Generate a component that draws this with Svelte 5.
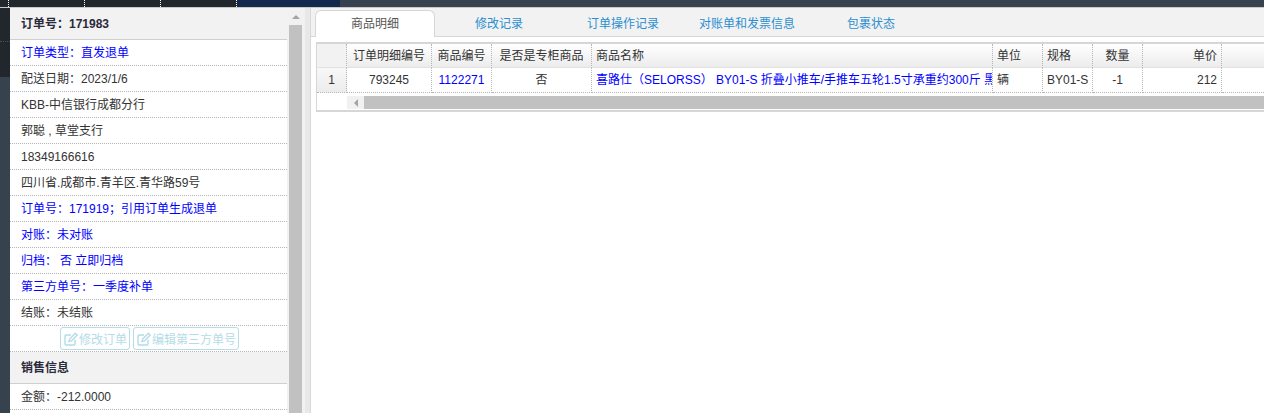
<script>
  const topTabs = [
    { label: '商品明细', active: true },
    { label: '修改记录' },
    { label: '订单操作记录' },
    { label: '对账单和发票信息' },
    { label: '包裹状态' },
  ];

  const orderRows = [
    { text: '订单类型：直发退单', blue: true },
    { text: '配送日期：2023/1/6' },
    { text: 'KBB-中信银行成都分行' },
    { text: '郭聪 , 草堂支行' },
    { text: '18349166616' },
    { text: '四川省.成都市.青羊区.青华路59号' },
    { text: '订单号：171919；引用订单生成退单', blue: true },
    { text: '对账：未对账', blue: true },
    { text: '归档：', tail: '否 立即归档', blue: true },
    { text: '第三方单号：一季度补单', blue: true },
    { text: '结账：未结账' },
  ];

  const columns = [
    { label: '订单明细编号', value: '793245', align: 'center' },
    { label: '商品编号', value: '1122271', align: 'center', blue: true },
    { label: '是否是专柜商品', value: '否', align: 'center' },
    { label: '商品名称', value: '喜路仕（SELORSS） BY01-S 折叠小推车/手推车五轮1.5寸承重约300斤 黑', align: 'left', blue: true },
    { label: '单位', value: '辆', align: 'left' },
    { label: '规格', value: 'BY01-S', align: 'left' },
    { label: '数量', value: '-1', align: 'center' },
    { label: '单价', value: '212', align: 'right' },
  ];
</script>

{#snippet editIcon()}
  <svg class="edit-icon" viewBox="0 0 14 14" width="14" height="14" aria-hidden="true">
    <path d="M11 7.5V12a1 1 0 0 1-1 1H2a1 1 0 0 1-1-1V4a1 1 0 0 1 1-1h5" fill="none" stroke="currentColor" stroke-width="1.4" />
    <path d="M5 9.5l.6-2.4L11.4 1.3l1.8 1.8-5.8 5.8z" fill="none" stroke="currentColor" stroke-width="1.4" />
  </svg>
{/snippet}

<div class="page">
  <div class="topbar">
    <div class="seg dark stub"></div>
    <div class="seg dark"></div>
    <div class="seg dark"></div>
    <div class="seg dark"></div>
    <div class="seg navy"></div>
    <div class="seg slate"></div>
  </div>

  <div class="body">
    <div class="rail">
      <div class="rail-item"></div>
      <div class="rail-rest"></div>
    </div>

    <aside class="panel">
      <h3 class="panel-head">订单号：171983</h3>
      {#each orderRows as row}
        <div class="panel-row" class:blue={row.blue}>
          {row.text}{#if row.tail}<span class="tail">{row.tail}</span>{/if}
        </div>
      {/each}
      <div class="panel-actions">
        <button class="ghost">{@render editIcon()}修改订单</button>
        <button class="ghost">{@render editIcon()}编辑第三方单号</button>
      </div>
      <h3 class="panel-head">销售信息</h3>
      <div class="panel-row">金额：-212.0000</div>
    </aside>

    <div class="vscroll">
      <div class="vscroll-arrow"></div>
      <div class="vscroll-thumb"></div>
    </div>
    <div class="splitter"></div>

    <main class="content">
      <nav class="tabs">
        {#each topTabs as tab}
          <div class="tab" class:active={tab.active}>{tab.label}</div>
        {/each}
      </nav>

      <div class="grid-wrap">
        <div class="grid">
          <div class="rownum head-cell"></div>
          {#each columns as col}
            <div class="cell head-cell" style="text-align: {col.align}">{col.label}</div>
          {/each}
          <div class="filler head-cell"></div>

          <div class="rownum body-cell">1</div>
          {#each columns as col}
            <div class="cell body-cell" class:blue={col.blue} style="text-align: {col.align}">{col.value}</div>
          {/each}
          <div class="filler body-cell"></div>
        </div>

        <div class="hscroll">
          <div class="hscroll-gap"></div>
          <div class="hscroll-arrow"><span></span></div>
          <div class="hscroll-thumb"></div>
        </div>
      </div>
    </main>
  </div>
</div>

<style>
  :global(body) {
    margin: 0;
    background: #fff;
  }

  .page {
    width: 1264px;
    height: 413px;
    overflow: hidden;
    display: flex;
    flex-direction: column;
    font-family: "Liberation Sans", "Noto Sans CJK SC", sans-serif;
    font-size: 12px;
    color: #333;
  }

  /* top strip */
  .topbar {
    display: flex;
    height: 7px;
    flex-shrink: 0;
    border-bottom: 1px solid #c9c9c9;
  }
  .seg {
    width: 75px;
    border-right: 1px dotted #fff;
  }
  .seg.stub { width: 8px; }
  .seg.dark { background: #22272e; }
  .seg.navy { width: 103px; background: #14284e; border-right: 0; }
  .seg.slate { flex: 1; background: #36424f; border-right: 0; }

  .body {
    flex: 1;
    display: flex;
    min-height: 0;
  }

  .rail {
    width: 10px;
    flex-shrink: 0;
    display: flex;
    flex-direction: column;
  }
  .rail-item {
    height: 33px;
    background: #22272e;
    border-bottom: 1px dotted #4a4f57;
  }
  .rail-rest {
    flex: 1;
    background: linear-gradient(#22272e 35px, #36434f 35px);
  }

  /* left panel */
  .panel {
    width: 277px;
    flex-shrink: 0;
    background: #fff;
    overflow: hidden;
  }
  .panel-head {
    margin: 0;
    height: 31px;
    line-height: 32px;
    padding: 0 11px;
    background: #f2f2f2;
    border-bottom: 1px solid #d0d0d0;
    font-size: 12px;
    font-weight: bold;
    color: #2a2a3a;
  }
  .panel-row {
    height: 25px;
    line-height: 26px;
    padding: 0 11px;
    border-bottom: 1px dotted #b5b5b5;
    white-space: nowrap;
  }
  .panel-row.blue { color: #0000ff; }
  .panel-row .tail { margin-left: 3px; }
  .panel-actions {
    height: 24px;
    display: flex;
    justify-content: center;
    align-items: flex-start;
    gap: 3px;
    padding: 1px 0 0 2px;
    border-bottom: 1px dotted #b5b5b5;
  }
  .ghost {
    display: flex;
    align-items: center;
    height: 23px;
    padding: 0 2px 0 3px;
    background: #fff;
    border: 1px solid #b6dde9;
    border-radius: 3px;
    color: #b4dce8;
    font-family: inherit;
    font-size: 12px;
    white-space: nowrap;
  }
  .edit-icon { margin-right: 1px; flex-shrink: 0; }

  /* vertical scrollbar */
  .vscroll {
    width: 17px;
    padding-right: 1px;
    flex-shrink: 0;
    background: #f1f1f1;
    display: flex;
    flex-direction: column;
    align-items: center;
  }
  .vscroll-arrow {
    width: 0;
    height: 0;
    margin-top: 7px;
    border-left: 4px solid transparent;
    border-right: 4px solid transparent;
    border-bottom: 4px solid #a3a3a3;
  }
  .vscroll-thumb {
    width: 13px;
    flex: 1;
    margin-top: 6px;
    background: #c1c1c1;
  }
  .splitter {
    width: 5px;
    flex-shrink: 0;
    background: #e8e8e8;
  }

  /* right side */
  .content {
    flex: 1;
    min-width: 0;
    background: #fff;
    border-left: 1px solid #d9d9d9;
    display: flex;
    flex-direction: column;
  }
  .tabs {
    height: 26px;
    display: flex;
    gap: 4px;
    padding: 2px 0 0 4px;
    background: #f2f2f2;
    border-bottom: 1px solid #d6d6d6;
    flex-shrink: 0;
  }
  .tab {
    box-sizing: border-box;
    width: 120px;
    height: 26px;
    line-height: 28px;
    text-align: center;
    color: #2a8fd0;
  }
  .tab.active {
    height: 27px;
    line-height: 26px;
    background: #fff;
    color: #555;
    border: 1px solid #d6d6d6;
    border-bottom: 0;
    border-radius: 6px 6px 0 0;
  }

  .grid-wrap {
    margin: 5px 0 0 5px;
    border: 1px solid #d6d6d6;
    border-top-width: 2px;
    border-right: 0;
    border-bottom-width: 2px;
  }
  .grid {
    display: grid;
    grid-template-columns: 30px 85px 60px 100px 401px 50px 50px 50px 79px 1fr;
    grid-template-rows: 24px 25px;
  }
  .head-cell {
    background: linear-gradient(#ffffff, #ececec);
    border-bottom: 1px solid #e2e2e2;
    line-height: 24px;
  }
  .body-cell {
    background: #fff;
    border-bottom: 1px dotted #b5b5b5;
    line-height: 24px;
  }
  .cell, .rownum {
    box-sizing: border-box;
    padding: 0 4px;
    border-right: 1px dotted #b5b5b5;
    white-space: nowrap;
    overflow: hidden;
  }
  .cell.blue { color: #0000ff; }
  .rownum { text-align: center; background: linear-gradient(#f8f8f8, #ececec); }
  .rownum.head-cell { background: #f2f2f2; }

  .hscroll {
    height: 17px;
    display: flex;
    align-items: stretch;
    padding: 3px 0 1px;
    box-sizing: border-box;
  }
  .hscroll-gap { width: 30px; }
  .hscroll-arrow {
    width: 17px;
    background: #f1f1f1;
    display: flex;
    align-items: center;
    justify-content: center;
  }
  .hscroll-arrow span {
    width: 0;
    height: 0;
    border-top: 4px solid transparent;
    border-bottom: 4px solid transparent;
    border-right: 4px solid #a3a3a3;
  }
  .hscroll-thumb {
    flex: 1;
    background: #c1c1c1;
  }
</style>
